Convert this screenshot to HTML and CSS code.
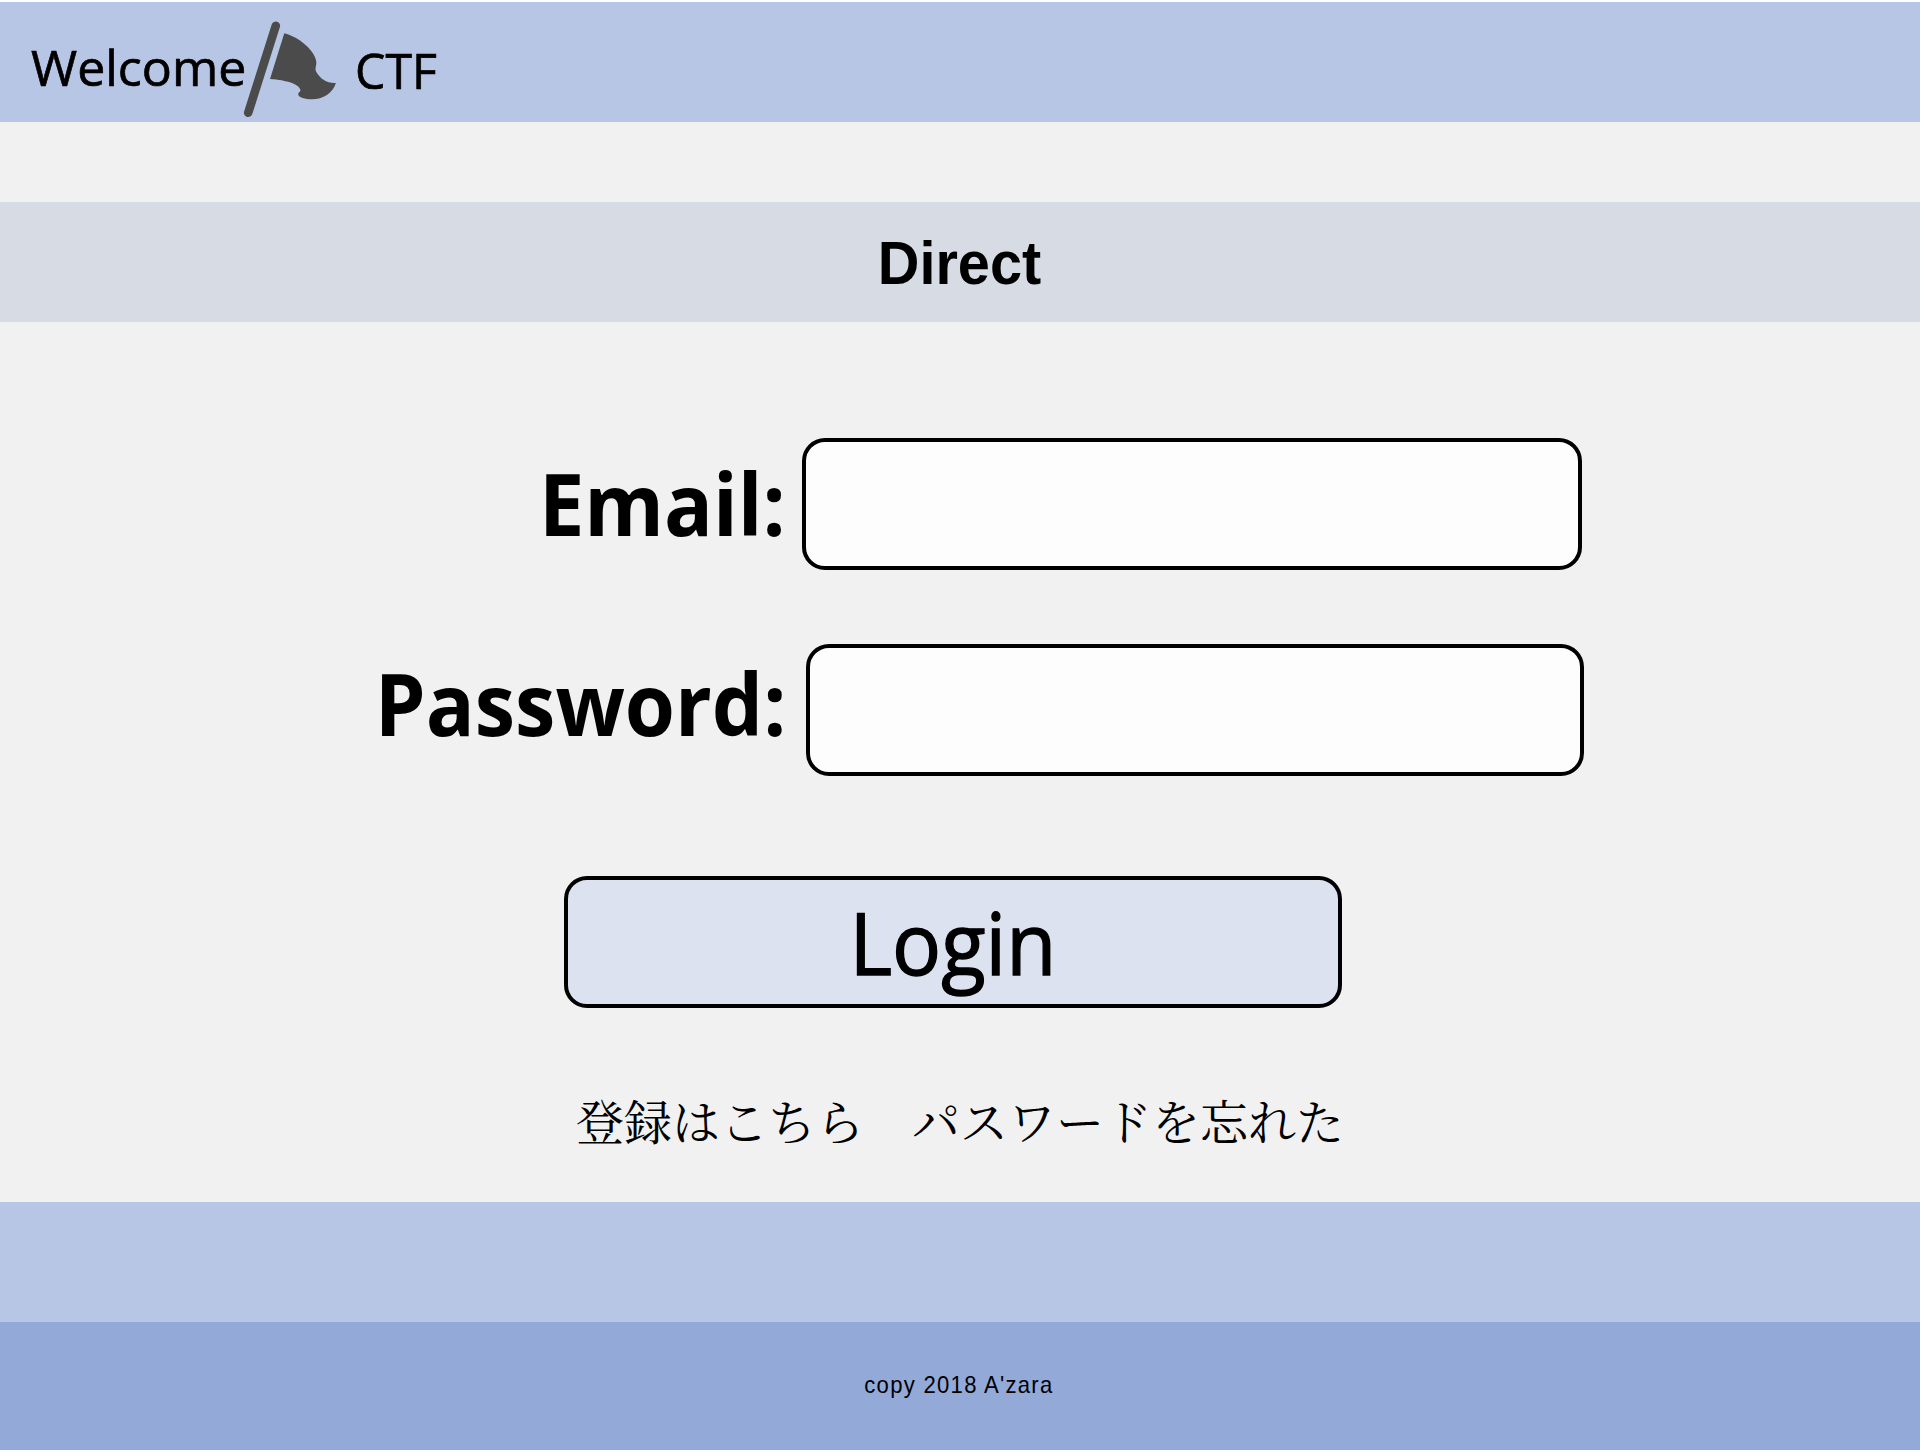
FILE: index.html
```html
<!DOCTYPE html>
<html lang="ja">
<head>
<meta charset="utf-8">
<title>Welcome CTF</title>
<link rel="stylesheet" href="styles.css">
</head>
<body>
<div class="page">
  <header class="header">
    <span class="brand">Welcome</span>
    <svg class="flag" viewBox="0 0 96 100" width="96" height="100" aria-hidden="true">
      <path d="M35.8 5.8 8.2 92.8" stroke="#4b4b4b" stroke-width="8.6" stroke-linecap="round"/>
      <path d="M44.3 13.3C58 16.5 76 31 76.3 42.3C76.5 46 75 47 75.8 51C80 59 87 63.5 95.9 63C93 73 83 79.3 72 79.3C65 79.3 58.5 77.5 58.2 74.5C58.3 72 60.5 72 60.4 70C59.5 64.5 47 60 30 59Z" fill="#4b4b4b"/>
    </svg>
    <span class="brand brand-ctf">CTF</span>
  </header>
  <div class="title-bar"><h1 class="title">Direct</h1></div>
  <form class="form">
    <div class="row">
      <label class="label" for="email"><span class="label-text">Email:</span></label>
      <input class="field" id="email" type="text">
    </div>
    <div class="row row-password">
      <label class="label" for="password"><span class="label-text">Password:</span></label>
      <input class="field field-password" id="password" type="password">
    </div>
    <button class="login" type="button"><span class="login-text">Login</span></button>
    <nav class="links"><a class="link">登録はこちら</a><a class="link">パスワードを忘れた</a></nav>
  </form>
  <div class="band"></div>
  <footer class="footer"><span class="copy">copy 2018 A'zara</span></footer>
</div>
</body>
</html>
```
FILE: styles.css
```css
* { box-sizing: border-box; }
body { margin: 0; background: #fff; color: #000; font-family: "Open Sans", sans-serif; }
.page { width: 1920px; height: 1448px; margin-top: 2px; display: flex; flex-direction: column; background: #f1f1f1; }
.header { height: 120px; display: flex; align-items: flex-start; padding-left: 31px; background: #b7c6e5; }
.brand { width: 214px; font-size: 50px; line-height: 68px; padding-top: 31px; white-space: nowrap; -webkit-text-stroke: 0.7px #000; }
.flag { flex: none; margin: 18px 0 0 -5px; fill: none; }
.brand-ctf { width: auto; margin-left: 19px; padding-top: 34px; transform: scaleX(.965); transform-origin: left; }
.title-bar { height: 120px; margin-top: 80px; display: flex; justify-content: center; background: #d7dbe3; }
.title { margin: 0 2px 0 0; font: bold 61px/70px "Liberation Sans", sans-serif; padding-top: 26px; transform: scaleX(.945); }
.form { height: 880px; padding-top: 116px; }
.row { display: flex; align-items: flex-start; }
.row-password { margin-top: 74px; }
.label { width: 786px; height: 132px; text-align: right; font-size: 86px; font-weight: 700; line-height: 116px; padding-top: 7px; }
.row-password .label { padding-top: 1px; }
.label-text { display: inline-block; transform: scaleX(.943); transform-origin: right; }
.field { width: 780px; height: 132px; margin-left: 16px; border: 4px solid #000; border-radius: 23px; background: #fdfdfd; padding: 0 24px; font: 60px "Open Sans", sans-serif; outline: none; }
.field-password { width: 778px; margin-left: 20px; }
.login { display: block; width: 778px; height: 132px; margin: 100px 0 0 564px; padding: 0; border: 4px solid #000; border-radius: 23px; background: #dce2f0; color: #000; font: 86px/116px "Open Sans", sans-serif; }
.login-text { display: inline-block; transform: scaleX(.95); -webkit-text-stroke: 1.4px #000; }
.links { display: flex; gap: 48px; margin: 82px 0 0 576px; font: 400 48px/60px "Noto Serif CJK JP", "Noto Sans CJK JP", serif; }
.link { color: #000; white-space: nowrap; }
.band { height: 120px; background: #b7c6e5; }
.footer { height: 128px; display: flex; justify-content: center; background: #93a9d8; }
.copy { margin-right: 2px; font: 24px/28px "Liberation Sans", sans-serif; letter-spacing: 1.4px; padding-top: 49px; transform: scaleX(.92); }
```
